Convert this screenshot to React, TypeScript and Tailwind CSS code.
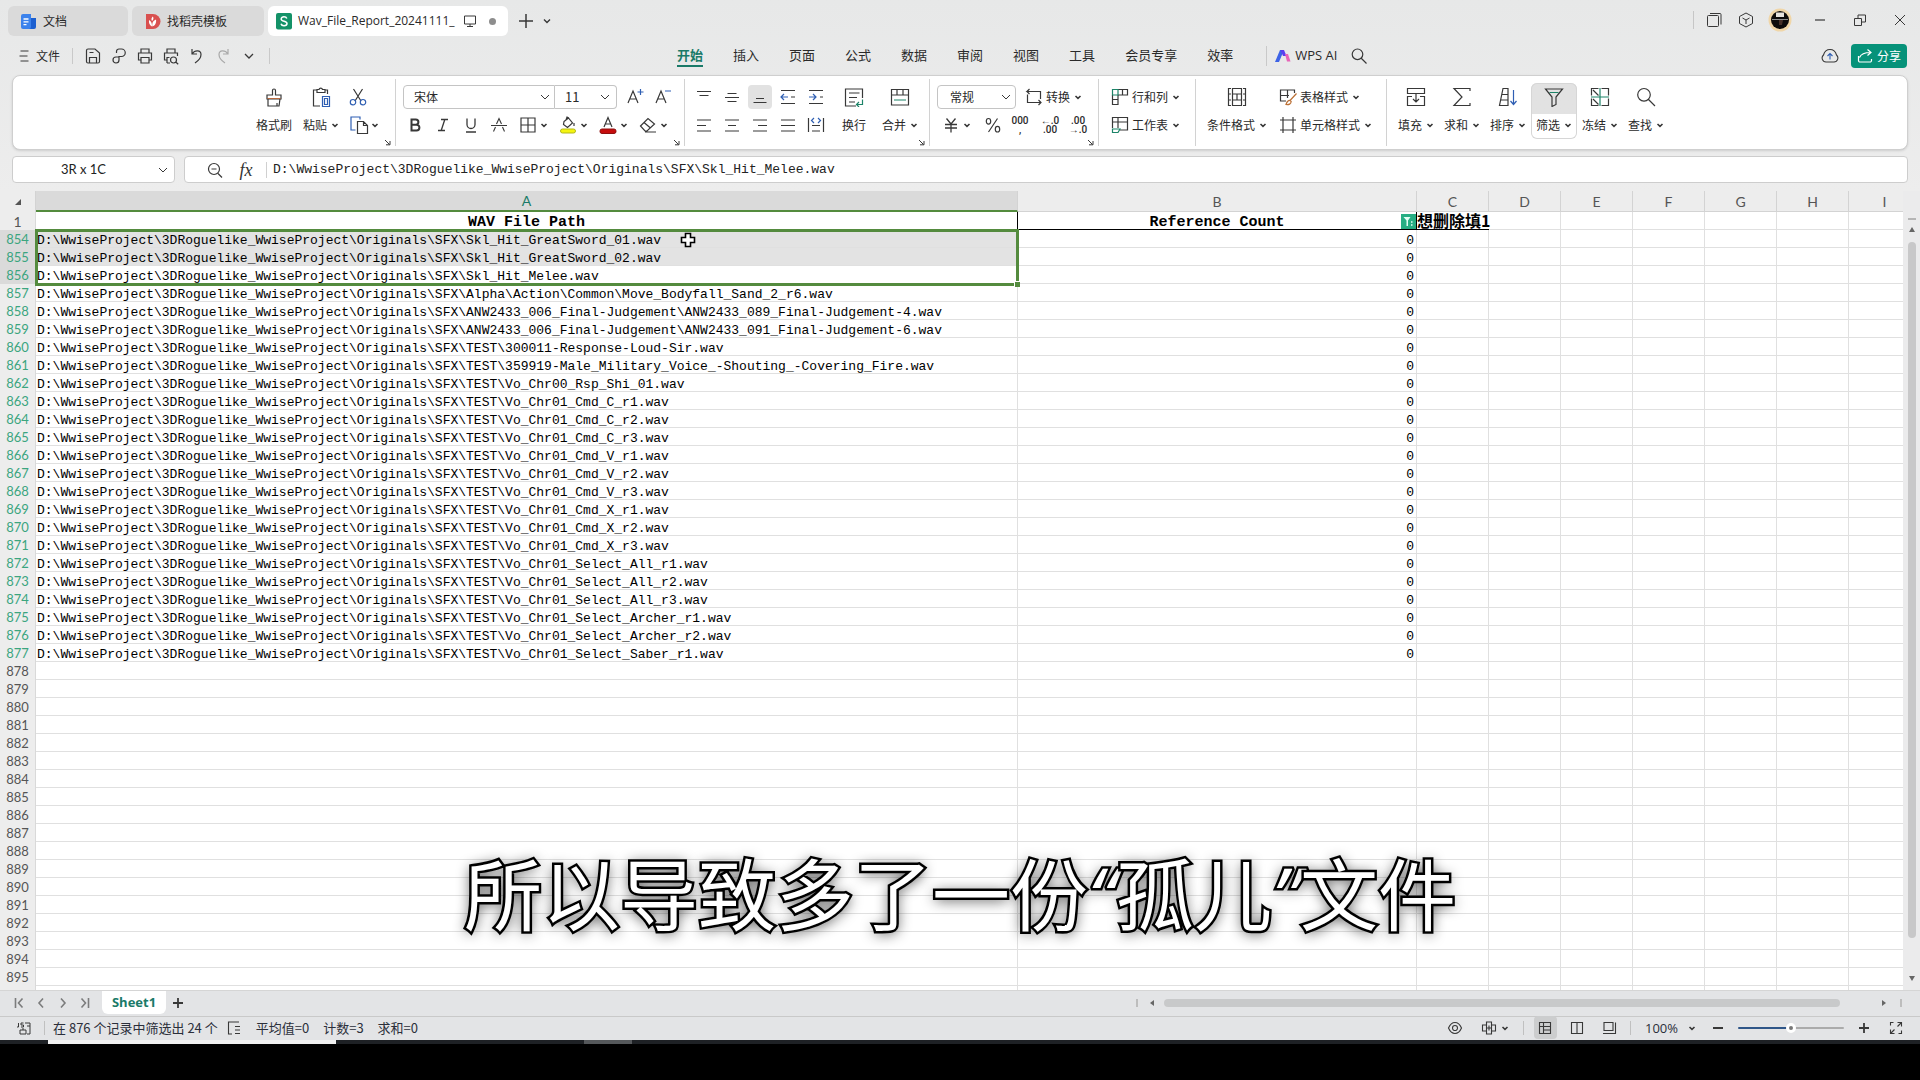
import React, { useState } from "react";
import clsx from "clsx";

// =======================================================================
// DATA
// =======================================================================
const ROOT = "D:\\WwiseProject\\3DRoguelike_WwiseProject\\Originals\\SFX\\";

const FILES = [
  "Skl_Hit_GreatSword_01.wav",
  "Skl_Hit_GreatSword_02.wav",
  "Skl_Hit_Melee.wav",
  "Alpha\\Action\\Common\\Move_Bodyfall_Sand_2_r6.wav",
  "ANW2433_006_Final-Judgement\\ANW2433_089_Final-Judgement-4.wav",
  "ANW2433_006_Final-Judgement\\ANW2433_091_Final-Judgement-6.wav",
  "TEST\\300011-Response-Loud-Sir.wav",
  "TEST\\359919-Male_Military_Voice_-Shouting_-Covering_Fire.wav",
  "TEST\\Vo_Chr00_Rsp_Shi_01.wav",
  "TEST\\Vo_Chr01_Cmd_C_r1.wav",
  "TEST\\Vo_Chr01_Cmd_C_r2.wav",
  "TEST\\Vo_Chr01_Cmd_C_r3.wav",
  "TEST\\Vo_Chr01_Cmd_V_r1.wav",
  "TEST\\Vo_Chr01_Cmd_V_r2.wav",
  "TEST\\Vo_Chr01_Cmd_V_r3.wav",
  "TEST\\Vo_Chr01_Cmd_X_r1.wav",
  "TEST\\Vo_Chr01_Cmd_X_r2.wav",
  "TEST\\Vo_Chr01_Cmd_X_r3.wav",
  "TEST\\Vo_Chr01_Select_All_r1.wav",
  "TEST\\Vo_Chr01_Select_All_r2.wav",
  "TEST\\Vo_Chr01_Select_All_r3.wav",
  "TEST\\Vo_Chr01_Select_Archer_r1.wav",
  "TEST\\Vo_Chr01_Select_Archer_r2.wav",
  "TEST\\Vo_Chr01_Select_Saber_r1.wav",
];

const FIRST_ROW = 854;
const LAST_ROW = 895;
const EMPTY_COLS = ["C", "D", "E", "F", "G", "H", "I"];
const MENUS = ["开始", "插入", "页面", "公式", "数据", "审阅", "视图", "工具", "会员专享", "效率"];

const MONO = "font-['Liberation_Mono','Noto_Sans_CJK_SC',monospace]";

// =======================================================================
// ICONS
// =======================================================================
type IconProps = {
  d?: string; // dark strokes
  a?: string; // accent strokes
  accent?: string;
  size?: number;
  sw?: number;
  className?: string;
  children?: React.ReactNode;
};

function Icon({ d, a, accent = "#2f5fb3", size = 20, sw = 1.2, className, children }: IconProps) {
  return (
    <svg
      width={size}
      height={size}
      viewBox={`0 0 ${size} ${size}`}
      fill="none"
      stroke="#383838"
      strokeWidth={sw}
      aria-hidden="true"
      className={clsx("shrink-0", className)}
    >
      {d && <path d={d} />}
      {a && <path d={a} stroke={accent} />}
      {children}
    </svg>
  );
}

const Chev = () => <Icon size={8} sw={1.6} d="M1.5 3 4 5.3 6.5 3" />;
const WideChev = () => (
  <Icon size={10} sw={1} d="M1 3l4 4 4-4" className="pointer-events-none" />
);

const Launcher = () => (
  <button aria-label="更多设置" className="absolute right-1 bottom-0">
    <Icon size={7} sw={1} d="M1 1l4.5 4.5M2 5.8h4V2" />
  </button>
);

const GREEN = "#1d8468";

// =======================================================================
// TITLE BAR
// =======================================================================
function TitleBar() {
  return (
    <header className="flex h-9 items-end pl-2">
      <div className="flex gap-1 text-[12px] leading-[18px] text-[#2a2a2a]">
        <button className="flex h-[30px] w-[120px] items-center gap-1.5 rounded-md bg-[#dadada] pl-3">
          <svg width="17" height="17" viewBox="0 0 17 17" aria-hidden="true">
            <path d="M1 3a2 2 0 0 1 2-2h8v15H3a2 2 0 0 1-2-2z" fill="#3b82ec" />
            <path d="M11 5h5v9a2 2 0 0 1-2 2H9a2 2 0 0 0 2-2z" fill="#1c5fd0" />
            <path d="M3.500 6h5M3.500 8.800h5M3.500 11.600h3" stroke="#fff" strokeWidth="1.300" />
          </svg>
          文档
        </button>
        <button className="flex h-[30px] w-[132px] items-center gap-1.5 rounded-md bg-[#dadada] pl-3">
          <svg width="17" height="17" viewBox="0 0 17 17" aria-hidden="true">
            <path d="M2 1h7a7.500 7.500 0 0 1 0 15H2z" fill="#d9504f" />
            <path d="M8 13.500C4.500 11.500 5 8.500 5 7c2 1 3 2.500 3 6.500zM8.300 13.500C8 9 9.500 7.500 12 6.500c.5 3-.5 6-3.700 7zM8 8C7 6.500 7.500 4.500 8.800 3.500 10 5 9.500 7 8 8z" fill="#fff" />
          </svg>
          找稻壳模板
        </button>
        <div className="flex h-[30px] w-[240px] items-center rounded-md bg-white pl-2">
          <svg width="16" height="17" viewBox="0 0 16 17" aria-hidden="true">
            <rect y="0" width="16" height="16.500" rx="2" fill="#149268" />
            <path d="M10.800 5.500C10.300 4.200 9.300 3.800 8 3.800c-1.600 0-2.800.8-2.800 2.100C5.200 9 11 7.500 11 10.600c0 1.400-1.300 2.200-3 2.200-1.500 0-2.600-.6-3-2" stroke="#fff" strokeWidth="1.500" fill="none" />
          </svg>
          <button className="ml-1.5 w-[164px] text-left font-['Open_Sans','Noto_Sans_CJK_SC',sans-serif] whitespace-nowrap">
            Wav_File_Report_20241111_
          </button>
          <Icon size={14} className="ml-px" sw={1} d="M1.500 2h11v8h-11zM7 10v2M4 12.500h6" />
          <span className="ml-3 size-[7px] rounded-full bg-[#8d8d8d]" />
        </div>
      </div>
      <div className="flex h-[30px] items-center">
        <button aria-label="新建" className="ml-2.5">
          <Icon size={16} sw={1.5} d="M8 1v14M1 8h14" />
        </button>
        <button aria-label="标签列表" className="ml-2">
          <Icon size={10} sw={1.4} d="M2 3.500l3 3 3-3" />
        </button>
      </div>
      <div className="ml-auto flex h-8 items-center pr-3">
        <span className="h-[18px] w-px bg-[#c6c6c6]" />
        <button aria-label="窗口" className="ml-3">
          <Icon size={16} sw={1} d="M1.500 4.500a1 1 0 0 1 1-1h9a1 1 0 0 1 1 1v9a1 1 0 0 1-1 1h-9a1 1 0 0 1-1-1zM4 1.500h10a1 1 0 0 1 1 1v10" />
        </button>
        <button aria-label="应用" className="ml-4">
          <Icon size={16} sw={1} d="M8 1l6.500 3.500v7L8 15l-6.500-3.500v-7zM4.500 6L8 8l3.500-2M8 8v4" />
        </button>
        <button aria-label="账号" className="ml-3.5">
          <svg width="24" height="24" viewBox="0 0 24 24" aria-hidden="true">
            <circle cx="12" cy="12" r="11.500" fill="#f0d6a8" />
            <circle cx="12" cy="12" r="9" fill="#0d0b0b" />
            <path d="M8 4.500h8v4.500H8z" fill="#e6e2dc" />
            <path d="M4 11.500h16" stroke="#8f8f8f" />
            <path d="M11 12h4l-1 5h-3z" fill="#473129" />
          </svg>
        </button>
        <button aria-label="最小化" className="ml-5">
          <Icon size={16} sw={1.2} d="M3 8h10" />
        </button>
        <button aria-label="还原" className="ml-6">
          <Icon size={16} sw={1} d="M2.500 6.500h7v7h-7zM6 6V3h7.500v7H10" />
        </button>
        <button aria-label="关闭" className="ml-6">
          <Icon size={16} sw={1} d="M3 3l10 10M13 3L3 13" />
        </button>
      </div>
    </header>
  );
}

// =======================================================================
// MENU ROW
// =======================================================================
function MenuRow() {
  const [active, setActive] = useState("开始");

  return (
    <nav className="flex h-[39px] items-center pr-[13px] pl-[18px] text-[#2a2a2a]">
      <button className="flex w-[54px] items-center gap-[6px] text-[12px] leading-[18px]">
        <Icon size={12} sw={1} d="M2.500 1h8M1.500 6h8M2.500 11h8" />
        文件
      </button>
      <span className="h-4 w-px bg-[#c9c9c9]" />
      <div className="flex items-center gap-1.5 pl-2.5">
        <button aria-label="保存">
          <Icon d="M3.500 4.500a1.500 1.500 0 0 1 1.500-1.500h7l4.500 4v8.500a1.500 1.500 0 0 1-1.500 1.500H5a1.500 1.500 0 0 1-1.500-1.500zM6.500 17v-5.500h7V17M6.500 6.500h4" />
        </button>
        <button aria-label="输出为PDF">
          <Icon d="M7.500 7V5.500A2.500 2.500 0 0 1 10 3h2.500a3.700 3.700 0 0 1 0 7.500H10V14a3 3 0 1 1-3-3h3" />
        </button>
        <button aria-label="打印">
          <Icon d="M6 7V3h8v4M6 14H3.500V7h13v7H14M6 11.500h8V17H6z" />
        </button>
        <button aria-label="打印预览">
          <Icon d="M6 7V3h8v4M6 14H3.500V7h13v3M6 17v-5.500h2.500M6 17h3M12.500 11a3 3 0 1 1 0 6 3 3 0 0 1 0-6zM15 16.200l2.200 2" />
        </button>
        <button aria-label="撤销">
          <Icon d="M5 3v5h5M5.500 7.500C7.500 4 14 3.500 14 8.500c0 4-3 6.500-6 8.500" />
        </button>
        <button aria-label="恢复">
          <svg width="20" height="20" viewBox="0 0 20 20" fill="none" stroke="#a9a9a9" strokeWidth="1.200">
            <path d="M15 3v5h-5M14.500 7.500C12.500 4 6 3.500 6 8.500c0 4 3 6.500 6 8.500" />
          </svg>
        </button>
        <button aria-label="自定义快速访问工具栏" className="ml-1">
          <Icon size={12} sw={1.3} d="M2 4l4 4 4-4" />
        </button>
      </div>
      <span className="ml-3.5 h-4 w-px bg-[#c9c9c9]" />

      <div className="ml-[407px] flex gap-[30px] text-[13px] leading-5">
        {MENUS.map((name) => (
          <button
            key={name}
            onClick={() => setActive(name)}
            className={clsx(
              "border-b-2 whitespace-nowrap",
              name === active ? "border-[#1a7a68] font-bold text-[#1a7a68]" : "border-transparent"
            )}
          >
            {name}
          </button>
        ))}
      </div>
      <span className="ml-[33px] h-5 w-px bg-[#c9c9c9]" />
      <button className="ml-2 flex items-center gap-1 font-['Open_Sans',sans-serif] text-[13px] whitespace-nowrap">
        <svg width="16" height="14" viewBox="0 0 16 14" aria-hidden="true">
          <path d="M0 13L5 1h4L4 13z" fill="#3d63e6" />
          <path d="M5.500 1H9l2.500 6H8z" fill="#5a3ff0" />
          <path d="M10 5h3l2.500 7.500H12z" fill="#e765b8" />
        </svg>
        WPS AI
      </button>
      <button aria-label="搜索" className="ml-[13px]">
        <Icon size={18} d="M7.500 2a5.300 5.300 0 1 1 0 10.600 5.300 5.300 0 0 1 0-10.600zM11.500 11.500L16.500 16.500" />
      </button>

      <button aria-label="云同步" className="ml-auto">
        <Icon
          size={18}
          sw={1.1}
          d="M5 15a4 4 0 0 1-2.500-7C3.500 4.500 6 2.500 9 2.500s5.500 2 6.500 5.500A4 4 0 0 1 13 15z"
          a="M9 12.500V6.500M6.500 9L9 6.500 11.500 9"
        />
      </button>
      <button className="ml-3 flex h-6 w-14 items-center justify-center gap-1 rounded bg-[#069279] text-[12px] leading-[18px] text-white">
        <svg width="16" height="16" viewBox="0 0 16 16" fill="none" stroke="#fff" strokeWidth="1.200" aria-hidden="true">
          <path d="M1.500 8v4.500a1.500 1.500 0 0 0 1.500 1.500h10a1.500 1.500 0 0 0 1.500-1.500V11M2.500 9.500C4 6 7 4.500 13.500 4.500M10.500 1.500l3.500 3-3.500 3" />
        </svg>
        分享
      </button>
    </nav>
  );
}

// =======================================================================
// RIBBON
// =======================================================================
function Group({ children, last, className }: { children: React.ReactNode; last?: boolean; className?: string }) {
  return (
    <div className={clsx("relative flex shrink-0 pt-1", !last && "border-r border-[#d2d2d2]", className)}>
      {children}
    </div>
  );
}

function Tall({ icon, label, drop, active, className }: { icon: React.ReactNode; label: string; drop?: boolean; active?: boolean; className?: string }) {
  return (
    <button
      className={clsx(
        "grid w-[46px] grid-rows-[28px_28px] place-items-center self-start",
        active && "rounded-md bg-linear-to-b from-[#e2e2e2] from-55% to-white to-55% ring-1 ring-[#d6d6d6] ring-inset",
        className
      )}
    >
      {icon}
      <span className="flex items-center gap-1 whitespace-nowrap">
        {label}
        {drop && <Chev />}
      </span>
    </button>
  );
}

function Small({ label, drop, active, className, children }: { label: string; drop?: boolean; active?: boolean; className?: string; children: React.ReactNode }) {
  return (
    <button
      aria-label={label}
      className={clsx("flex h-6 items-center justify-center gap-0.5", active && "rounded bg-[#e2e2e2]", className)}
    >
      {children}
      {drop && <Chev />}
    </button>
  );
}

function Labelled({ icon, label }: { icon: React.ReactNode; label: string }) {
  return (
    <button className="flex h-7 items-center whitespace-nowrap">
      {icon}
      <span className="mr-1 ml-0.5">{label}</span>
      <Chev />
    </button>
  );
}

function Digits({ top, bottom }: { top: string; bottom: string }) {
  return (
    <span className="text-center font-['Roboto',sans-serif] text-[10px] leading-[9px] font-medium whitespace-nowrap">
      {top}
      <br />
      {bottom}
    </span>
  );
}

function Ribbon() {
  return (
    <section className="mr-3 ml-3 flex h-[75px] justify-center overflow-hidden rounded-lg border border-[#cfcfcf] bg-white py-[3px] text-[12px] leading-[18px] text-[#2a2a2a] shadow-sm">
      <Group className="w-[145px]">
        <Tall
          label="格式刷"
          icon={<Icon d="M8.500 8V3.500a1.500 1.500 0 0 1 3 0V8h5.500v4H3V8zM4 12v7h11l1-7M13 16v3" a="M3.500 11.500h13" accent="#b9683c" />}
        />
        <Tall
          className="ml-px"
          label="粘贴"
          drop
          icon={<Icon d="M6 3H2.500v16H9M14 3h2.500v4M6 5.500V2.500h2a1.800 1.800 0 0 1 3.500 0H14v3z" a="M11.500 9.500h7v10h-7zM13.500 11.500h3v6h-3z" />}
        />
        <div className="flex flex-col gap-1 pt-0.5 pl-1">
          <Small label="剪切">
            <Icon className="mr-auto" d="M5.500 2l7.500 12M14.500 2L7 14" a="M5 12.500a2.700 2.700 0 1 1 0 5.400 2.700 2.700 0 0 1 0-5.400zM15 12.500a2.700 2.700 0 1 1 0 5.400 2.700 2.700 0 0 1 0-5.400z" />
            <span className="w-2.5" />
          </Small>
          <Small label="复制" drop>
            <Icon d="M8.500 6.500h6l4 4v8h-10zM14.500 6.500v4h4" a="M6.500 15H2V2h9v2.500" />
          </Small>
        </div>
        <Launcher />
      </Group>

      <Group className="w-[289px] flex-col">
        <div className="flex h-7 items-center pl-[7px]">
          <label className="flex h-6 w-[152px] items-center rounded-l border border-[#c4c4c4] pr-1 pl-2.5">
            <select aria-label="字体" className="flex-1 appearance-none bg-transparent outline-none">
              <option>宋体</option>
            </select>
            <WideChev />
          </label>
          <label className="flex h-6 w-[62px] items-center rounded-r border border-l-0 border-[#c4c4c4] pr-1.5 pl-2.5">
            <select aria-label="字号" className="w-0 flex-1 appearance-none bg-transparent text-[13px] outline-none">
              <option>11</option>
            </select>
            <WideChev />
          </label>
          <Small label="增大字号" className="ml-1 w-7">
            <Icon d="M3 16L8 4l5 12M4.800 12h6.500" a="M12.500 5h6M15.500 2v6" />
          </Small>
          <Small label="减小字号" className="w-7">
            <Icon d="M3 16L8 4l5 12M4.800 12h6.500" a="M12 4h6" />
          </Small>
        </div>
        <div className="flex h-7 items-center pl-[5px]">
          <Small label="加粗" className="w-7">
            <Icon sw={2} d="M6.500 4.500h4.300a2.500 2.500 0 0 1 0 5.200H6.500zM6.500 9.700h5a2.900 2.900 0 0 1 0 5.800h-5z" />
          </Small>
          <Small label="倾斜" className="w-7">
            <Icon sw={1.3} d="M8 4.500h7M5 15.500h7M11.800 4.500L8.200 15.500" />
          </Small>
          <Small label="下划线" className="w-7">
            <Icon sw={1.3} d="M6 3.500v6a4 4 0 0 0 8 0v-6M5 17h10" />
          </Small>
          <Small label="删除线" className="w-7">
            <Icon sw={1.1} d="M2 10.500h16M7.500 9L10 3.500 12.500 9M6.500 12L4.500 16.500M13.500 12L15.500 16.500" />
          </Small>
          <Small label="边框" drop className="w-10">
            <Icon d="M3 3h14v14H3zM10 3v14M3 10h14" />
          </Small>
          <Small label="填充颜色" drop className="w-10">
            <Icon d="M6 6.500L10.500 3l4 5-5 4.500-4-3zM8 5l1-3 2 1M16 8v3">
              <rect x="2.500" y="14" width="15" height="4" rx="2" fill="#f5f50f" stroke="#b3b81a" strokeWidth="1" />
            </Icon>
          </Small>
          <Small label="字体颜色" drop className="w-10">
            <Icon d="M6 12L10 2.500 14 12M7.300 9h5.500">
              <rect x="2" y="14" width="16" height="4.500" rx="2" fill="#c60d0d" stroke="#8e1010" strokeWidth="1" />
            </Icon>
          </Small>
          <Small label="清除" drop className="w-10">
            <Icon d="M2.500 11L10 3.500l6.500 5.500-7.500 7H7zM6 7.500l6.500 5.500M7 17h11" />
          </Small>
        </div>
        <Launcher />
      </Group>

      <Group className="w-[245px] pl-[5px]">
        <div className="grid grid-cols-[repeat(5,28px)] grid-rows-[28px_28px] items-center justify-items-center self-start">
          <Small label="顶端对齐"><Icon d="M3 4.500h14M5.500 8.500h9" /></Small>
          <Small label="垂直居中"><Icon d="M5.500 6.500h9M3 10.500h14M5.500 14.500h9" /></Small>
          <Small label="底端对齐" active className="w-6"><Icon d="M6 11.500h8M3.500 15.500h13" /></Small>
          <Small label="减少缩进量"><Icon d="M3 3.500h14M3 16.500h14M13 10h4" a="M3 10h7M6 7l-3 3 3 3" /></Small>
          <Small label="增加缩进量"><Icon d="M3 3.500h14M3 16.500h14M14 10h3" a="M3 10h7M7 7l3 3-3 3" /></Small>
          <Small label="左对齐"><Icon d="M3 5h14M3 10.500h9M3 16h14" /></Small>
          <Small label="居中"><Icon d="M3 5h14M6 10.500h8M3 16h14" /></Small>
          <Small label="右对齐"><Icon d="M3 5h14M8 10.500h9M3 16h14" /></Small>
          <Small label="两端对齐"><Icon d="M3 5h14M3 10.500h14M3 16h14" /></Small>
          <Small label="分散对齐"><Icon d="M2.500 3v14M17.500 3v14M6 10.500h8M6 16h8" a="M8 3L5.500 5.500 8 8M12 3l2.500 2.500L12 8" /></Small>
        </div>
        <Tall
          className="ml-px"
          label="换行"
          icon={<Icon d="M12 19H1.500V2h17v9M5 6h10.500M5 10.500h8M5 15h6" a="M18.500 12.500v5h-6M15 15l-2.500 2.500L15 20" accent={GREEN} />}
        />
        <Tall
          label="合并"
          drop
          icon={<Icon d="M1.500 2.500h17v15.500h-17zM1.500 8h17M7 2.500V8M13 2.500V8" a="M4 13h12" accent={GREEN} />}
        />
        <Launcher />
      </Group>

      <Group className="w-[169px] flex-col">
        <div className="flex h-7 items-center gap-2 pl-[7px]">
          <label className="flex h-6 w-[79px] items-center rounded border border-[#c4c4c4] pr-1 pl-3">
            <select aria-label="数字格式" className="w-0 flex-1 appearance-none bg-transparent outline-none">
              <option>常规</option>
            </select>
            <WideChev />
          </label>
          <Labelled label="转换" icon={<Icon d="M5.500 2L3 4.500h13.500V12M3.500 7.500V15.500h13.500M14.500 13l2.500 2.500-2.500 2.500M3 4.500L5.500 7" />} />
        </div>
        <div className="flex h-7 items-center">
          <Small label="货币" drop className="w-[52px]">
            <Icon sw={1.3} d="M5.500 3.500L10 9l4.500-5.500M4 9.500h12M4 13h12M10 9v8.500" />
          </Small>
          <Small label="百分比" className="w-[22px]">
            <Icon d="M14.500 3.500l-9 13.500M5.500 3.500a2.200 2.800 0 1 1 0 5.600 2.200 2.800 0 0 1 0-5.600zM14.500 11.400a2.200 2.800 0 1 1 0 5.600 2.200 2.800 0 0 1 0-5.600z" />
          </Small>
          <Small label="千位分隔" className="w-8"><Digits top="000" bottom="," /></Small>
          <Small label="增加小数位" className="w-7"><Digits top="←.0" bottom=".00" /></Small>
          <Small label="减少小数位" className="w-7"><Digits top=".00" bottom="→.0" /></Small>
        </div>
        <Launcher />
      </Group>

      <Group className="w-[97px] flex-col pl-[11px]">
        <Labelled label="行和列" icon={<Icon d="M8 2.500h9.500v5.500H8M12.500 2.500V8M2.500 8v9.500H8V8M2.500 12.500H8" a="M2.500 2.500H8V8H2.500z" accent={GREEN} />} />
        <Labelled label="工作表" icon={<Icon d="M2.500 13V2.500h15v12.500H10M2.500 7h15M8 2.500V13" a="M2.500 14h7.500l-2 3.500H2.500z" accent={GREEN} />} />
      </Group>

      <Group className="w-[191px]">
        <Tall
          className="w-[82px]"
          label="条件格式"
          drop
          icon={<Icon d="M4 1.500H1.500v17H4M16 1.500h2.500v17H16M5.500 1.500h9v17h-9zM5.500 7h9M5.500 13h9M1.500 7H4M1.500 13H4M16 7h2.500M16 13h2.500M10 7v6" />}
        />
        <div>
          <Labelled label="表格样式" icon={<Icon d="M8 14H2.500V3h14v3M2.500 8.500H11M9.500 3v8" a="M18.500 6.500L12 13.500M12 13.500c-2.500-.5-3 1.500-4 4 3 .5 5-.5 5.200-3z" accent="#bb7035" />} />
          <Labelled label="单元格样式" icon={<Icon d="M2 5h16M2 15h16M5 2v16M15 2v16" />} />
        </div>
      </Group>

      <Group last className="w-[282px] pl-1.5">
        <Tall label="填充" drop icon={<Icon d="M1.500 1.500h17v5h-17zM6 9.500H1.500v9h17v-9H14M10 6.500v8M7 12l3 3 3-3" />} />
        <Tall label="求和" drop icon={<Icon d="M18 4V1.500H2L10 10 2 18.500h16V16" />} />
        <Tall label="排序" drop icon={<Icon d="M5 1.500h5v17H1.500zM4 7.500h6M2.800 13H10" a="M15.500 3v14M12.500 14l3 3.500 3-3.500" />} />
        <Tall active label="筛选" drop icon={<Icon d="M1.500 2h17L12 10v7.500L8 19.500V10z" a="M5.500 5.500h9" accent={GREEN} />} />
        <Tall label="冻结" drop icon={<Icon d="M8.500 1.500h-7v7M11.500 1.500h7v7M1.500 11.500v7h7M11.500 18.500h7v-7M3 3l5.500 5.500M3 12l5.500 5.500" a="M10 1v18M1 10h18" accent={GREEN} />} />
        <Tall label="查找" drop icon={<Icon d="M8 1.500a6.300 6.300 0 1 1 0 12.600 6.300 6.300 0 0 1 0-12.600zM12.500 12.500L19 19" />} />
      </Group>
    </section>
  );
}

// =======================================================================
// FORMULA BAR
// =======================================================================
function FormulaBar() {
  return (
    <div className="mx-3 mt-1.5 mb-2 flex h-[27px] gap-[9px]">
      <div className="flex w-[163px] items-center rounded border border-[#cdcdcd] bg-white pr-1.5">
        <input
          aria-label="名称框"
          defaultValue="3R x 1C"
          className="w-0 flex-1 bg-transparent pr-1 text-center font-['Lato',sans-serif] text-[13px] text-[#222] outline-none"
        />
        <WideChev />
      </div>
      <div className="flex flex-1 items-center rounded border border-[#cdcdcd] bg-white pl-[21px]">
        <button aria-label="缩小">
          <Icon size={18} d="M8 2.500a5.500 5.500 0 1 1 0 11 5.500 5.500 0 0 1 0-11zM5.500 8h5M12 12.500l4 4" />
        </button>
        <button className="ml-3 w-5 font-['Liberation_Serif',serif] text-[18px] leading-5 text-[#333] italic">fx</button>
        <span className="ml-2.5 h-4 w-px bg-[#d0d0d0]" />
        <input
          aria-label="编辑栏"
          defaultValue={`${ROOT}Skl_Hit_Melee.wav`}
          className={clsx(MONO, "ml-1.5 flex-1 bg-transparent text-[13px] leading-5 text-[#222] outline-none")}
        />
      </div>
    </div>
  );
}

// =======================================================================
// SHEET GRID
// =======================================================================
function HeaderRow() {
  const th = "h-5 border-r border-b border-[#d3d3d3] p-0 text-center text-[14px] leading-[19px] font-normal";
  return (
    <tr className="font-['Lato',sans-serif] text-[#555]">
      <th className="h-5 border-r border-[#d3d3d3] p-0">
        <Icon size={8} className="mx-auto" sw={0}>
          <path d="M7 1v6H1z" fill="#555" />
        </Icon>
      </th>
      <th className={clsx(th, "border-b-2 border-b-[#548b3e] bg-[#dadada] text-[#1a7a68]")}>A</th>
      <th className={th}>B</th>
      {EMPTY_COLS.map((c) => (
        <th key={c} className={th}>{c}</th>
      ))}
    </tr>
  );
}

function TitleRow() {
  const cell = clsx(MONO, "h-[18px] border-r border-b border-black p-0 pt-1 text-center text-[15px] leading-[13px] font-bold whitespace-nowrap");
  return (
    <tr className="bg-white text-black">
      <th className="border-r border-[#d9d9d9] bg-[#ededed] p-0 font-['Lato',sans-serif] text-[14px] leading-[17px] font-normal text-[#555]">1</th>
      <td className={cell}>WAV File Path</td>
      <td className={clsx(cell, "relative")}>
        Reference Count
        <button aria-label="筛选 Reference Count" className="absolute top-0.5 right-0 size-[15px] bg-[#27ae83]">
          <svg width="15" height="15" viewBox="0 0 15 15" aria-hidden="true">
            <path d="M2.500 3h7L7 6.500V12H5.500V6.500z" fill="#e3fff5" />
            <path d="M10 8h1.500M10 11h1.500" stroke="#e3fff5" strokeWidth="1.500" />
          </svg>
        </button>
      </td>
      <td className="h-[18px] border-b border-black p-0 font-['Noto_Sans_CJK_SC',sans-serif] text-[16px] leading-[17px] font-bold whitespace-nowrap">
        想删除填1
      </td>
      {EMPTY_COLS.slice(1).map((c) => (
        <td key={c} className="border-r border-b border-[#e0e0e0]" />
      ))}
    </tr>
  );
}

function Selection() {
  return (
    <div className="pointer-events-none absolute -top-px -right-0.5 -left-px z-10 h-[57px] border-[3px] border-[#548b3e]">
      <span className="absolute -right-1 -bottom-1 size-1.5 border-t border-l border-white bg-[#548b3e]" />
    </div>
  );
}

function Grid() {
  // one more row than the labels, it is half hidden by the sheet tabs
  const rows = Array.from({ length: LAST_ROW - FIRST_ROW + 2 }, (_, i) => i);
  const line = "h-[18px] border-r border-b border-[#e0e0e0] p-0";

  return (
    <main className="flex min-h-0 flex-1 bg-[#ededed]">
      <div className="min-w-0 flex-1 overflow-hidden">
        <table className="w-full min-w-[1921px] table-fixed border-separate border-spacing-0">
          <colgroup>
            <col className="w-9" />
            <col className="w-[982px]" />
            <col className="w-[399px]" />
            {EMPTY_COLS.slice(0, 6).map((c) => (
              <col key={c} className="w-[72px]" />
            ))}
            <col />
          </colgroup>
          <thead>
            <HeaderRow />
          </thead>
          <tbody>
            <TitleRow />
            {rows.map((i) => {
              const file = FILES[i];
              const picked = i < 3;
              return (
                <tr key={i} className="bg-white text-black">
                  <th
                    className={clsx(
                      "h-[18px] border-r border-[#d9d9d9] p-0 font-['Lato',sans-serif] text-[13px] leading-[17px] font-normal",
                      picked ? "bg-[#dadada]" : "bg-[#ededed]",
                      file ? "text-[#3ba57f]" : "text-[#555]"
                    )}
                  >
                    {FIRST_ROW + i <= LAST_ROW && FIRST_ROW + i}
                  </th>
                  <td
                    className={clsx(
                      line,
                      MONO,
                      "relative pt-1 pl-px text-[13px] leading-[13px] whitespace-nowrap",
                      i < 2 && "border-[#cfcfcf] bg-[#e3e3e3]"
                    )}
                  >
                    {file && ROOT + file}
                    {i === 0 && <Selection />}
                    {i === 0 && (
                      <svg width="16" height="16" viewBox="0 0 16 16" aria-hidden="true" className="absolute top-0.5 left-[644px]">
                        <path d="M5.500 1.500h5v4h4v5h-4v4h-5v-4h-4v-5h4z" fill="#fff" stroke="#000" strokeWidth="1.600" />
                      </svg>
                    )}
                  </td>
                  <td className={clsx(line, MONO, "pt-1 pr-0.5 text-right text-[13px] leading-[13px]")}>{file && "0"}</td>
                  {EMPTY_COLS.map((c) => (
                    <td key={c} className={line} />
                  ))}
                </tr>
              );
            })}
          </tbody>
        </table>
      </div>
      <div className="flex w-[17px] flex-col items-center bg-[#ebebec] pt-[27px]">
        <span className="h-0.5 w-2 bg-[#b5b5b5]" />
        <Icon size={8} sw={0} className="mt-1.5">
          <path d="M4 1l3 5H1z" fill="#666" />
        </Icon>
        <span className="mt-2 w-2 flex-1 rounded-full bg-[#c8c8c9]" />
        <Icon size={8} sw={0} className="mt-9 mb-2">
          <path d="M4 7L1 2h6z" fill="#666" />
        </Icon>
      </div>
    </main>
  );
}

// =======================================================================
// BOTTOM BARS
// =======================================================================
function SheetBar() {
  return (
    <div className="flex h-[26px] items-center border-t border-[#d5d5d5] bg-[#e3e4e6] pb-0.5 pl-[13px]">
      <div className="flex w-[89px] gap-2.5 opacity-60">
        <button aria-label="第一张"><Icon size={12} sw={1.6} d="M2.500 1v10M9.500 1.500L5.500 6l4 4.500" /></button>
        <button aria-label="上一张"><Icon size={12} sw={1.6} d="M8 1.500L4 6l4 4.500" /></button>
        <button aria-label="下一张"><Icon size={12} sw={1.6} d="M4 1.500L8 6l-4 4.500" /></button>
        <button aria-label="最后一张"><Icon size={12} sw={1.6} d="M2.500 1.500L6.500 6l-4 4.500M9.500 1v10" /></button>
      </div>
      <button className="h-[23px] w-16 self-start rounded-b-md bg-white font-['Open_Sans',sans-serif] text-[13px] leading-[23px] font-bold text-[#1a7a68]">
        Sheet1
      </button>
      <button aria-label="新建工作表" className="ml-1.5">
        <Icon size={12} sw={1.8} d="M6 1v10M1 6h10" />
      </button>
      <div className="ml-auto flex w-[784px] items-center">
        <span className="h-2 w-0.5 bg-[#bdbdbd]" />
        <Icon size={8} sw={0} className="ml-2.5">
          <path d="M6 1v6L2 4z" fill="#666" />
        </Icon>
        <span className="ml-2 h-2 flex-1 rounded-full bg-[#c8c9ca]" />
        <Icon size={8} sw={0} className="ml-10">
          <path d="M2 1v6l4-3z" fill="#666" />
        </Icon>
        <span className="mr-[18px] ml-3 h-2 w-0.5 bg-[#bdbdbd]" />
      </div>
    </div>
  );
}

function StatusBar() {
  const [zoom, setZoom] = useState(50);

  return (
    <footer className="flex h-6 items-center border-t border-[#c9c9c9] bg-[#e3e4e6] pr-4 pb-0.5 pl-4 text-[13px] leading-5 whitespace-nowrap text-[#2b2f3a]">
      <button aria-label="JS 宏">
        <Icon size={16} sw={1} d="M2.500 3v4H1M7.500 3H5v2h2.500v2H5M9 3h5v3h-3M14 6v8h-3M4 10h6v4H4zM7 8v2" />
      </button>
      <span className="ml-3 h-3.5 w-px bg-[#c0c0c0]" />
      <span className="ml-2">在 876 个记录中筛选出 24 个</span>
      <button aria-label="统计面板" className="ml-2">
        <Icon size={16} sw={1.1} d="M13 2H2.500v12H6M9 6.500h5M9 10h5M9 13.500h5" />
      </button>
      <div className="ml-3.5 flex gap-3.5">
        <span>平均值=0</span>
        <span>计数=3</span>
        <span>求和=0</span>
      </div>

      <button aria-label="护眼模式" className="ml-auto">
        <Icon size={16} sw={1.1} d="M1.500 8C3 4.500 5 2.500 8 2.500S13 4.500 14.500 8C13 11.500 11 13.500 8 13.500S3 11.500 1.500 8zM8 5.500a2.500 2.500 0 1 1 0 5 2.500 2.500 0 0 1 0-5z" />
      </button>
      <button aria-label="阅读布局" className="ml-[18px] flex items-center gap-1">
        <Icon size={16} sw={1.1} d="M5.500 5V2h5v3h4v6h-4v3h-5v-3h-4V5zM5.500 5v6M10.500 5v6M8 5.500v5M5.500 8h5" />
        <Chev />
      </button>
      <span className="ml-3.5 h-3.5 w-px bg-[#c0c0c0]" />
      <button aria-label="普通视图" className="ml-2.5 flex h-[23px] w-[23px] items-center justify-center rounded-sm bg-[#cccdce]">
        <Icon size={16} sw={1.1} d="M2.500 2.500h11v11h-11zM2.500 6.500h11M6.500 2.500v11M6.500 10h7" />
      </button>
      <button aria-label="分页预览" className="ml-3">
        <Icon size={16} sw={1.1} d="M2.500 2.500h11v11h-11zM8 2.500v11" />
      </button>
      <button aria-label="页面布局" className="ml-4">
        <Icon size={16} sw={1.1} d="M3 2.500h9v8H3zM14.500 2.500v11H2" />
      </button>
      <span className="ml-[13px] h-3.5 w-px bg-[#c0c0c0]" />
      <button className="ml-3.5 flex items-center gap-2.5 font-['Open_Sans',sans-serif] text-[13px]">
        100%
        <Chev />
      </button>
      <button aria-label="缩小显示比例" className="ml-3.5">
        <Icon size={16} sw={2} d="M3 8h10" />
      </button>
      <input
        type="range"
        aria-label="显示比例"
        value={zoom}
        onChange={(e) => setZoom(Number(e.target.value))}
        className="mx-3 h-0.5 w-[106px] appearance-none rounded-full bg-linear-to-r from-[#2f5688] from-50% to-[#ababab] to-50% [&::-webkit-slider-thumb]:size-2.5 [&::-webkit-slider-thumb]:appearance-none [&::-webkit-slider-thumb]:rounded-full [&::-webkit-slider-thumb]:border-[3px] [&::-webkit-slider-thumb]:border-white [&::-webkit-slider-thumb]:bg-[#777]"
      />
      <button aria-label="放大显示比例">
        <Icon size={16} sw={1.8} d="M8 3v10M3 8h10" />
      </button>
      <button aria-label="全屏显示" className="ml-4">
        <Icon size={16} sw={1.1} d="M9.500 2.500h4v4M13.500 2.500L9.500 6.500M6.500 13.500h-4v-4M2.500 13.500l4-4M2.500 5.500v-3h3M13.500 10.500v3h-3" />
      </button>
    </footer>
  );
}

// =======================================================================
// APP
// =======================================================================
export default function App() {
  return (
    <div className="relative flex h-screen flex-col overflow-hidden bg-black font-['Noto_Sans_CJK_SC',sans-serif]">
      <div className="flex min-h-0 flex-1 flex-col">
        <div className="bg-linear-to-b from-[#e7e8e8] to-[#ededed]">
          <TitleBar />
          <MenuRow />
          <Ribbon />
          <FormulaBar />
        </div>
        <Grid />
        <SheetBar />
        <StatusBar />
      </div>

      {/* sliver of the taskbar under the window */}
      <div className="flex h-1 bg-[#1e2125]">
        <span className="ml-12 w-72 bg-[#f1f1f1]" />
        <span className="ml-[248px] w-12 bg-[#55585b]" />
      </div>
      <div className="h-9" />

      {/* subtitle */}
      <p className="pointer-events-none absolute inset-x-0 bottom-[137px] text-center font-['Noto_Sans_CJK_SC',sans-serif] text-[78px] leading-[96px] whitespace-nowrap text-white [-webkit-text-stroke:5px_#000] [paint-order:stroke_fill] [text-shadow:0_2px_14px_rgba(0,0,0,0.9)]">
        所以导致多了一份<i className="font-['Noto_Sans','Open_Sans',sans-serif]">“</i>孤儿
        <i className="font-['Noto_Sans','Open_Sans',sans-serif]">”</i>文件
      </p>
    </div>
  );
}
